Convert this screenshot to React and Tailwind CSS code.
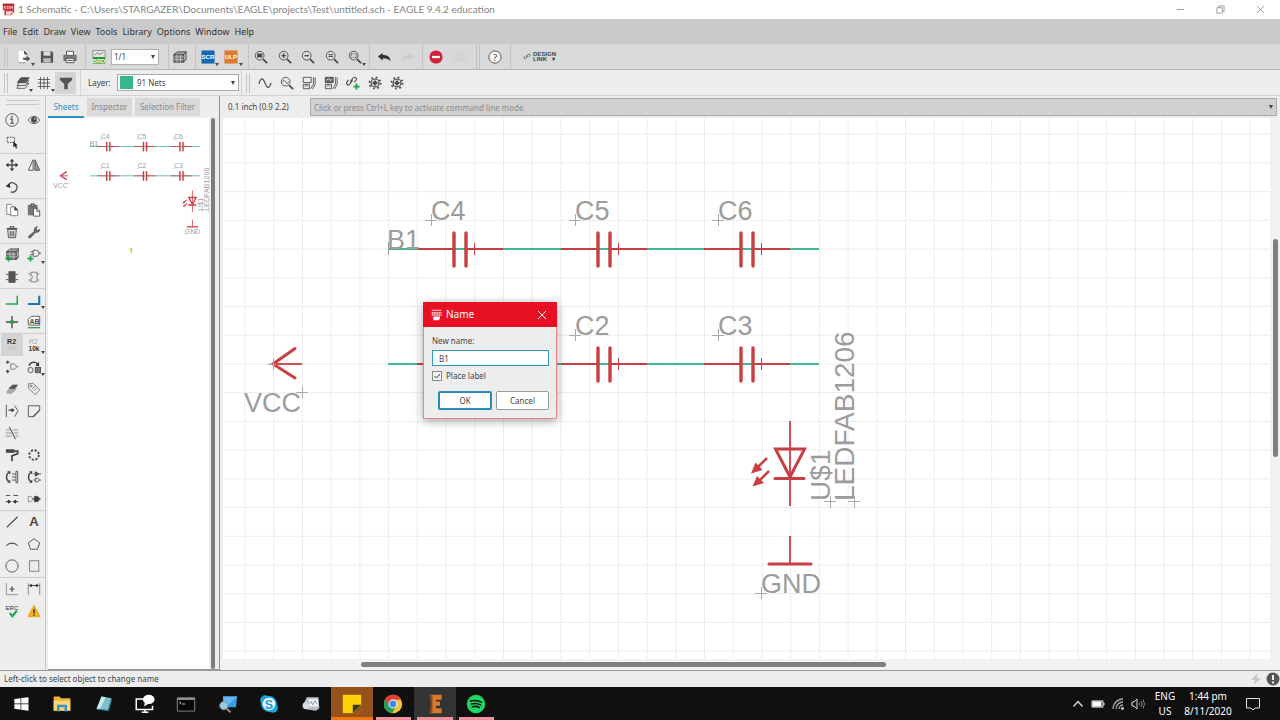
import React from "react";

const INK = "#4a4a4a";

function Svg({ children, size = "size-4", box = "0 0 16 16" }) {
  return (
    <svg viewBox={box} className={`${size} shrink-0`} fill="none" stroke={INK} strokeWidth="1" aria-hidden="true">
      {children}
    </svg>
  );
}

const Lens = ({ children }) => (
  <>
    <circle cx="6.5" cy="6.5" r="5" />
    <path d="M10.3 10.3 15 15" strokeWidth="2" />
    {children}
  </>
);

const Chip = ({ label }) => (
  <>
    <rect x="0.5" y="0.5" width="15" height="15" fill={label === "SCR" ? "#1767b3" : "#dd7a2f"} stroke="none" />
    <text x="8" y="10.5" fontSize="7" fontWeight="700" fill="#fff" stroke="none" textAnchor="middle" fontFamily="Liberation Sans, sans-serif">{label}</text>
  </>
);

const Brick = () => (
  <>
    <path d="M1 5 5 2h10l-3 3z" fill="#aaa" />
    <path d="M1 5h11v9H1z" fill="#777" />
    <path d="M12 5l3-3v9l-3 3z" fill="#999" />
    <path d="M1 8h11l3-3M1 11h11l3-3M4.5 5v9M8.5 5v9" stroke="#ddd" strokeWidth=".7" />
  </>
);

const Gear = () => (
  <>
    <circle cx="8" cy="8" r="4.6" strokeWidth="1.3" />
    <circle cx="8" cy="8" r="6.4" strokeWidth="2" strokeDasharray="2 3.03" />
    <circle cx="8" cy="8" r="2" fill={INK} />
    <path d="M8 3.5v3M8 9.500v3M3.500 8h3M9.500 8h3" />
  </>
);

const Link = () => <path d="M6 8.500 9.500 4a2 2 0 0 1 3.200 2.300L10.500 9M8 7l-1.500-.6M8.500 7 5 11.500a2 2 0 0 1-3.200-2.300L4 6.500" strokeWidth="1.200" />;
const Plus = () => <path d="M4 8.500v7M.5 12h7" stroke="#1fa145" strokeWidth="2" />;

const glyphs = {
  newdoc: (
    <>
      <path d="M2 1.500h7l3 3V7M12 11v3.500H2z" fill="#fff" stroke="none" />
      <path d="M2 1.500h7v10l-2 3H2z" fill="#fff" stroke="none" />
      <path d="M8.500 1.500l3 3v2M2 14.500h8" stroke="#888" />
      <path d="M8.500 1.500v3h3z" fill="#444" />
      <path d="M7 10h5" strokeWidth="2.200" />
      <path d="M11 6.500 15 10l-4 3.500z" fill={INK} stroke="none" />
    </>
  ),
  save: (
    <>
      <path d="M1 1.500h12.500L15 3v11.500H1z" fill="#555" stroke="none" />
      <path d="M4 1.500h8v5H4z" fill="#ddd" stroke="none" />
      <path d="M3.500 9h9v5.500h-9z" fill="#999" stroke="none" />
      <path d="M4.500 11h7M4.500 13h7" stroke="#ddd" />
    </>
  ),
  print: (
    <>
      <path d="M4 1.500h8v5H4z" fill="#fff" />
      <path d="M1 6h14v6H1z" fill="#7b7b7b" stroke="#666" />
      <path d="M3.500 9.500h9v5h-9z" fill="#eee" />
      <path d="M5 12h6" />
    </>
  ),
  schbrd: (
    <>
      <rect x="1" y="0.500" width="14" height="8" fill="#e4e4e4" stroke="#888" />
      <path d="M3 6l3-3 3 2 4-2.500" stroke="#777" />
      <rect x="1" y="8" width="14" height="7.500" fill="#1f9a43" stroke="none" />
      <text x="8" y="14.300" fontSize="6.500" fontWeight="700" fill="#fff" stroke="none" textAnchor="middle" fontFamily="Liberation Sans, sans-serif">BRD</text>
    </>
  ),
  brick: <Brick />,
  scr: <Chip label="SCR" />,
  ulp: <Chip label="ULP" />,
  zoomfit: <Lens><rect x="4" y="4.500" width="5" height="3.500" fill={INK} /></Lens>,
  zoomin: <Lens><path d="M6.500 4v5M4 6.500h5" strokeWidth="1.500" /></Lens>,
  zoomout: <Lens><path d="M4 6.500h5" strokeWidth="1.500" /></Lens>,
  zoomredraw: <Lens><path d="M4 5.500h5M4 7.500h5" strokeWidth="1.200" /></Lens>,
  zoomsel: <Lens><rect x="3.500" y="4.500" width="6" height="4" strokeDasharray="1.500 1" /></Lens>,
  undo: <path d="M1 7.500 6.500 3v2.800c5 0 8.500 1.700 9 7C13 10 10 9.300 6.500 9.300V12z" fill="#333" stroke="none" />,
  redo: <path d="M15 7.500 9.500 3v2.800C4.500 5.800 1.500 7.500 1 12.800 3.500 10 6 9.300 9.500 9.300V12z" fill="#cecece" stroke="none" />,
  stop: (
    <>
      <circle cx="8" cy="8" r="7.500" fill="#d3213c" stroke="none" />
      <path d="M3.500 8h9" stroke="#fff" strokeWidth="2.600" />
    </>
  ),
  go: <circle cx="8" cy="8" r="6" fill="#d2d2d2" stroke="#cdcdcd" />,
  help: (
    <>
      <circle cx="8" cy="8" r="7" fill="#f4f4f4" />
      <text x="8" y="12" fontSize="11" fill={INK} stroke="none" textAnchor="middle" fontFamily="Noto Sans, sans-serif">?</text>
    </>
  ),
  link: <Link />,
  layers: (
    <>
      <path d="M5 8.500h9.500L10.500 14H1z" fill="#fff" />
      <path d="M5 5.500h9.500L10.500 11H1z" fill="#ddd" />
      <path d="M5.500 2h9.500L11 7.500H1.500z" fill="#555" />
    </>
  ),
  grid: <path d="M4 1v14M8 1v14M12 1v14M1 4h14M1 8h14M1 12h14" strokeWidth=".9" />,
  filter: <path d="M1 2h14v2.500L10 9v6H6V9L1 4.500z" fill="#555" stroke="none" />,
  wave: <path d="M1 9C3 1.500 5.500 1.500 8 8s4.500 7 7 0" strokeWidth="1.300" />,
  lenswave: <Lens><path d="M3 7c1-3 2.500-2.500 3.500 0s2.500 2 3.200-.6" /></Lens>,
  simA: (
    <>
      <path d="M1.500 1.500h9v6h-9zM1.500 9.500h7v5h-7zM13 1.500v8l-3 5M15 1.500v8L12 15" />
      <path d="M3 12l2-1.500 2 1.500" />
    </>
  ),
  simB: (
    <>
      <path d="M1.500 1.500h9v6h-9z" fill="#666" />
      <path d="M1.500 9.500h7v5h-7zM13 1.500v8l-3 5M15 1.500v8L12 15M3 12l2-1.500 2 1.500" />
      <path d="M3 5l2-2 2 2 2-1" stroke="#eee" />
    </>
  ),
  linkplus: <><g transform="translate(-1 -2)"><Link /></g><g transform="translate(8 0)"><Plus /></g></>,
  gear: <Gear />,
  info: (
    <>
      <circle cx="8" cy="8" r="7.200" />
      <path d="M6 7h2.200v4.500M6 11.700h4.500" strokeWidth="1.300" />
      <circle cx="8" cy="4.500" r="1" fill={INK} stroke="none" />
    </>
  ),
  eye: (
    <>
      <path d="M1.500 8c3-5.500 10-5.500 13 0-3 5.500-10 5.500-13 0z" />
      <circle cx="8" cy="7.800" r="3" fill={INK} />
      <circle cx="9" cy="6.800" r=".8" fill="#fff" stroke="none" />
    </>
  ),
  group: (
    <>
      <rect x="2.500" y="2.500" width="8.500" height="6" strokeDasharray="2 1" />
      <path d="M9.500 7v7l1.700-1.400 1.500 2.900 1.300-.7-1.400-2.600 2-.3z" fill="#222" stroke="none" />
    </>
  ),
  move: (
    <>
      <path d="M8 3v10M3 8h10" strokeWidth="1.500" />
      <path d="M8 .8 10.500 4h-5zM8 15.200 10.500 12h-5zM.8 8 4 5.500v5zM15.200 8 12 5.500v5z" fill="#333" stroke="none" />
    </>
  ),
  mirror: <><path d="M7 2v12H1.500z" /><path d="M9 2v12h5.500z" fill="#999" /></>,
  rotate: <><path d="M4 5.500a5.300 5.300 0 1 1 2.500 8" strokeWidth="1.400" /><path d="M.8 7.500 6.500 8.800 5 3z" fill="#333" stroke="none" transform="rotate(8 3 6)" /></>,
  copy: <><path d="M2 1.500h5l2.500 2.500v9H2z" fill="#fff" stroke="#777" /><path d="M6.500 4.500h5L14.500 8v6.500h-8z" fill="#fff" stroke="#777" /><path d="M11 4.500V8h3.500z" fill="#444" /></>,
  paste: <><path d="M1.500 2.500h10v11h-10z" fill="#777" stroke="#666" /><path d="M4.500 1h4v3h-4z" fill="#999" /><path d="M7.500 6h4l3 3v6h-7z" fill="#fff" /><path d="M11 6v3.500h3.500" /></>,
  trash: <><path d="M3 5h10l-1 9.500H4z" fill="#ddd" /><path d="M2 4h12M6 3.500V2h4v1.500" strokeWidth="1.300" /><path d="M6 7v6M8 7v6M10 7v6" /></>,
  wrench: <path d="M1.500 12.500 8 7c-.8-3 1.500-6 5-5.500L10.800 4l1.200 1.700L15 4.300c.4 3.200-2.500 5.300-5 4.600L4 15c-2 .8-3.500-1-2.500-2.500z" fill="#666" stroke="none" />,
  addbrick: <><g transform="translate(1 -1)"><Brick /></g><Plus /></>,
  addgate: <><path d="M7 2.500h3c5 0 5 7 0 7H7zM4 4.500h3M4 7.500h3M13.500 6H16" /><Plus /></>,
  part: <><rect x="4.500" y="2" width="7" height="12" fill="#555" /><path d="M1 5h3M1 11h3M12 5h3M12 11h3" /></>,
  partout: <path d="M4.500 2.500h7v11h-7v-3.500a1.500 1.500 0 0 0 0-3.500zM1.500 4.500h3M1.500 11.500h3M11.500 4.500H14M11.500 11.500H14" stroke="#777" />,
  net: <path d="M1 12.500h13V3" stroke="#2aa052" strokeWidth="1.700" />,
  bus: <path d="M1 12.500h13V3" stroke="#1c74c4" strokeWidth="2.400" />,
  junction: <><path d="M8 1v14M1 8h14" strokeWidth="1.500" /><circle cx="8" cy="8" r="2.500" fill="#2aa052" stroke="none" /></>,
  label: (
    <>
      <path d="M5 1.500h9.500v10h-13V5z" fill="#fff" />
      <text x="8.500" y="9.800" fontSize="8" fontWeight="700" fill={INK} stroke="none" textAnchor="middle" fontFamily="Liberation Sans, sans-serif">AB</text>
      <path d="M1 14.500h14" stroke="#2aa052" strokeWidth="1.500" />
    </>
  ),
  name: (
    <>
      <text x="7.500" y="7" fontSize="8" fontWeight="700" fill="#333" stroke="none" textAnchor="middle" fontFamily="Liberation Sans, sans-serif">R2</text>
      <path d="M4 10.500h9M4 12.500h9" stroke="#c2c2c2" />
    </>
  ),
  value: (
    <>
      <text x="7" y="6.500" fontSize="8" fill="#aaa" stroke="none" textAnchor="middle" fontFamily="Liberation Sans, sans-serif">R2</text>
      <text x="8" y="14.500" fontSize="7.500" fontWeight="700" fill="#333" stroke="none" textAnchor="middle" fontFamily="Liberation Sans, sans-serif">10k</text>
    </>
  ),
  gateswap: <><path d="M6.500 4.500h3c4.500 0 4.500 6 0 6h-3zM13 7.500h2.500" stroke="#777" /><path d="M1 2.500h4M3 .8v3.500M1 13h4M3 11v4" strokeWidth="1.500" /></>,
  replace: <><circle cx="4" cy="11.500" r="3" /><rect x="9.500" y="8.500" width="6" height="6" fill="#777" /><path d="M2.500 6.500C4 2 9 1.500 12 4.500" strokeWidth="1.700" /><path d="M9.500 6.500 14 7l-.5-5z" fill="#333" stroke="none" /></>,
  block: <><path d="M2 10 9 3h5.500l-2 6-5 4.500H2z" fill="#aaa" stroke="none" /><path d="M4 7.500 8.500 3H15l-4.500 5z" fill="#555" stroke="none" /></>,
  tag: <><path d="M1.500 2 7 1.500l7.500 7.500-5 5.500L2 7.500z" stroke="#777" /><circle cx="4.500" cy="4.500" r="1.200" stroke="#777" /><path d="m6 8 3-3M8 10l3-3" stroke="#777" /></>,
  splitwire: <><path d="M1.500 1v14M11 2l4 6-4 6.500" /><path d="M4 7h4" strokeWidth="1.500" /><path d="M7.500 4.500 11 7 7.500 9.500z" fill="#333" stroke="none" /></>,
  miter: <><path d="M7.500 14.500h-6V2h13v5" /><path d="M7 14.500 14.500 7" strokeWidth="1.500" /></>,
  slice: <><path d="M1 4.500h5M9 4.500h6M1 8h6.500M10 8h5M1 11.500h7M12 11.500h3" stroke="#888" /><path d="m5 1 7 14" strokeWidth="1.200" /></>,
  paint: <><path d="M1 1.500h10v4H1z" fill="#444" stroke="none" /><path d="M11 3.500h3.500v3L8 9v6" strokeWidth="2" /></>,
  array: <circle cx="8" cy="8" r="5.500" strokeWidth="2.200" strokeDasharray="2.500 1.820" />,
  pinswap: <><path d="M4 3C1 5 1 11 4 13" strokeWidth="1.800" /><path d="M2.500 1.500h3.500v3.500zM2.500 14.500h3.500V11z" fill="#333" stroke="none" /><path d="M8 4.500h4M8 8h4M8 11.500h4M12.500 1.500h2v13h-2z" /></>,
  gatesw2: <><path d="M4 3C1 5 1 11 4 13" strokeWidth="1.800" /><path d="M2.500 1.500h3.500v3.500zM2.500 14.500h3.500V11z" fill="#333" stroke="none" /><path d="M9.500 2v5l4-2.500z" fill="#444" /><path d="M7.500 4.500H16M9.500 9.500h2c3 0 3 4 0 4h-2zM7.500 11.500h2M14 11.500h2" /></>,
  gap: <><path d="M1 4h5M9.500 4h5.500" /><path d="M1 11h3.500M11.500 11H15" strokeWidth="1.300" /><path d="m3.500 8.500 4 2.500-4 2.500zM12.500 8.500l-4 2.500 4 2.500z" fill="#333" stroke="none" /></>,
  bridge: <><path d="M1.500 5h2.500c3 0 3 6 0 6H1.500z" stroke="#888" /><path d="M8.500 5H11c4 0 4 6 0 6H8.500z" fill="#333" /><path d="M6.500 8h9" strokeWidth="1.500" /></>,
  line: <path d="M2 14 14.500 2" strokeWidth="1.200" />,
  text: <text x="8" y="13" fontSize="15" fontWeight="700" fill={INK} stroke="none" textAnchor="middle" fontFamily="Liberation Sans, sans-serif">A</text>,
  arc: <path d="M1.500 10c3.500-4 9.500-4 13 0" strokeWidth="1.200" />,
  circle: <circle cx="8" cy="8" r="7" />,
  polygon: <path d="M8 2 14.500 6.800 12 14H4L1.500 6.800z" />,
  rect: <rect x="3" y="2" width="10.500" height="12" stroke="#777" />,
  origin: <><path d="M1.500 1v13.500H15" stroke="#888" /><path d="M8 5v6M5 8h6" strokeWidth="1.400" /></>,
  dim: <><path d="M1.500 1.500v13M14.500 1.500v13" stroke="#777" /><path d="M3 4h10" strokeWidth="1.300" /><path d="M2 4 5.500 2v4zM14 4l-3.500-2v4z" fill="#333" stroke="none" /></>,
  erc: (
    <>
      <text x="8" y="6.500" fontSize="7" fill="#333" stroke="none" textAnchor="middle" fontFamily="Liberation Sans, sans-serif">ERC</text>
      <path d="m5.500 10.500 3 3.500 5-6.500" stroke="#1fa145" strokeWidth="2.400" />
    </>
  ),
  warn: <><path d="M8 1.500 15 14.500H1z" fill="#f5b21d" stroke="#e8a012" strokeLinejoin="round" /><path d="M8 6v4.500M8 12v1.500" stroke="#222" strokeWidth="1.600" /></>,
  sheet: (
    <>
      <path d="M1 1h14v10l-4 4H3V9H1z" fill="#d6343b" stroke="none" />
      <path d="M1 1h14v1.500H1z" fill="#8e2a2e" stroke="none" />
      <path d="M3.500 4v3M6 4.500h2M6 6.500h2M10 4v3M12.500 4v3" stroke="#fff" strokeWidth="1.200" />
      <path d="M5 10h8v1.500l-3 3H5z" fill="#f3dada" stroke="none" />
    </>
  ),
  sheetlight: (
    <>
      <path d="M1 1h13v1.500H1zM1 4h13v5H1z" fill="#f8b8bc" stroke="none" />
      <path d="M3.500 5v3M6 5.500h2M6 7.500h2M10 5v3M12.500 5v3" stroke="#d11c2b" />
      <path d="M3 10h9v2.500L10 15H3z" fill="#fff" stroke="none" />
    </>
  ),
};

function Caret() {
  return <span aria-hidden="true" className="absolute right-0 bottom-[2px] border-x-2 border-t-3 border-x-transparent border-t-[#444]" />;
}

function Tool({ id, label, caret, active, width = "w-[22px]", dim }) {
  return (
    <button type="button" aria-label={label} aria-pressed={active} className={`relative flex h-[22px] ${width} shrink-0 items-center justify-center ${active ? "bg-[#d4d4d4]" : ""} ${dim ? "opacity-60" : ""}`}>
      <Svg size="size-[14px]">{glyphs[id]}</Svg>
      {caret && <Caret />}
    </button>
  );
}

const Sep = ({ tone = "bg-[#c3c3c3]" }) => <span aria-hidden="true" className={`h-full w-px shrink-0 ${tone}`} />;
const Grip = () => <span aria-hidden="true" className="mx-1 h-5 w-1 shrink-0 border-x border-[#c4c4c4]" />;
const Down = () => <span aria-hidden="true" className="pointer-events-none mr-[3px] border-x-2 border-t-4 border-x-transparent border-t-[#444]" />;

const menus = ["File", "Edit", "Draw", "View", "Tools", "Library", "Options", "Window", "Help"];

const palette = [
  [["info", "Info"], ["eye", "Show"], ["group", "Group"]],
  [["move", "Move"], ["mirror", "Mirror"], ["rotate", "Rotate"]],
  [["copy", "Copy"], ["paste", "Paste"], ["trash", "Delete"], ["wrench", "Change"]],
  [["addbrick", "Add part"], ["addgate", "Add gate", 1], ["part", "Module"], ["partout", "Port"]],
  [["net", "Net"], ["bus", "Bus", 1], ["junction", "Junction"], ["label", "Label"]],
  [["name", "Name"], ["value", "Value", 1], ["gateswap", "Smash"], ["replace", "Replace", 1], ["block", "Design block"], ["tag", "Attribute"], ["splitwire", "Split"], ["miter", "Miter"], ["slice", "Slice"], null, ["paint", "Paint"], ["array", "Array"], ["pinswap", "Pin swap"], ["gatesw2", "Gate swap"], ["gap", "Optimize"], ["bridge", "Invoke"]],
  [["line", "Line"], ["text", "Text"], ["arc", "Arc"], ["polygon", "Polygon"], ["circle", "Circle"], ["rect", "Rectangle"]],
  [["origin", "Mark"], ["dim", "Dimension"], ["erc", "ERC"], ["warn", "Errors"]],
];

const RED = "#c93e42";
const GREEN = "#43b796";

function Capacitor({ x, y, name, k }) {
  return (
    <g>
      <g stroke={RED}>
        <path d={`M${x - 43} ${y}h36M${x + 6} ${y}h37`} strokeWidth={1.8 * k} />
        <path d={`M${x - 6} ${y - 16}v33M${x + 6} ${y - 16}v33`} strokeWidth={3.4 * k} strokeLinecap="round" />
        <path d={`M${x + 14.500} ${y - 6}v12`} strokeWidth="1" />
      </g>
      {name && (
        <>
          <path d={`M${x - 35} ${y - 28.500}h12M${x - 28.500} ${y - 35}v12`} stroke="#aaa" strokeWidth="1" />
          <text x={x - 29} y={y - 29}>{name}</text>
        </>
      )}
    </g>
  );
}

function Drawing({ k = 1, first }) {
  return (
    <g fill="#9c9c9c" fontSize="27" fontFamily="Liberation Sans, Arial, sans-serif">
      <path d="M388 249h431M388 364h431" fill="none" stroke={GREEN} strokeWidth={1.8 * k} />
      <Capacitor x={460} y={249} name="C4" k={k} />
      <Capacitor x={604} y={249} name="C5" k={k} />
      <Capacitor x={747} y={249} name="C6" k={k} />
      <Capacitor x={460} y={364} name={first} k={k} />
      <Capacitor x={604} y={364} name="C2" k={k} />
      <Capacitor x={747} y={364} name="C3" k={k} />
      <path d="M388.500 242v13" stroke="#999" />
      <text x="387" y="249">B1</text>
      <g fill="none" stroke={RED} strokeWidth={1.8 * k}>
        <path d="M273 364h29" />
        <path d="M295 348.500 273 364l22 14" strokeWidth={3 * k} strokeLinecap="round" />
        <path d="M790 421v85M790 536v28" />
        <path d="M775.500 449h29L790 477zM775 478.500h29M769 564h42" strokeWidth={3 * k} strokeLinecap="round" />
        <path d="m767 458-9 9M769 471l-9 9" strokeWidth={2.500 * k} />
        <path d="m751 473.500 4.500-11 7 7.500zM752.500 486.500 757 476l7 7z" fill={RED} stroke="none" />
      </g>
      <g stroke="#aaa" strokeWidth="1">
        <path d="M296 392.500h12M302.500 386v12M824 501.500h12M830.500 496v12M848 501.500h12M854.500 496v12M755 593.500h12M761.500 587v12M268 364.500h8M273.500 358v12" />
      </g>
      <text x="244" y="412">VCC</text>
      <text x="761" y="593">GND</text>
      <g fontSize="28">
        <text transform="translate(830 501) rotate(-90)">U$1</text>
        <text transform="translate(854 501) rotate(-90)">LEDFAB1206</text>
      </g>
    </g>
  );
}

function NameDialog() {
  return (
    <form role="dialog" aria-label="Name" onSubmit={(e) => e.preventDefault()} className="absolute top-[184px] left-[200px] w-[134px] border border-[#e4858b] bg-[#ededed] shadow-[0_2px_9px_rgba(0,0,0,0.35)]">
      <header className="-mx-px -mt-px flex h-[25px] items-center bg-[#e81123] pr-[10px] pl-2 text-white">
        <Svg size="size-3">{glyphs.sheetlight}</Svg>
        <h2 className="ml-[3px] flex-1 text-[10px]">Name</h2>
        <button type="button" aria-label="Close">
          <svg viewBox="0 0 10 10" className="size-[10px]" stroke="#fff" aria-hidden="true"><path d="m1 1 8 8M9 1 1 9" /></svg>
        </button>
      </header>
      <div className="pt-2 pr-[7px] pb-2 pl-2">
        <label htmlFor="net-name" className="block h-3 leading-3">New name:</label>
        <input id="net-name" defaultValue="B1" className="mt-[3px] block h-4 w-full border border-[#2f96bd] bg-white px-[6px] outline-none" />
        <label className="mt-1 flex h-3 items-center gap-1">
          <span className="relative flex size-[10px]">
            <input type="checkbox" defaultChecked className="peer size-[10px] appearance-none border border-[#8a8a8a] bg-[#f6f6f6]" />
            <svg viewBox="0 0 10 10" className="pointer-events-none absolute inset-0 hidden size-[10px] peer-checked:block" fill="none" stroke="#333" aria-hidden="true"><path d="m2.500 5 2 2 3.500-4" /></svg>
          </span>
          Place label
        </label>
        <div className="mt-[9px] flex justify-end gap-1">
          <button type="submit" className="h-[19px] w-[54px] rounded-xs border-2 border-[#2b8db5] bg-white">OK</button>
          <button type="button" className="h-[19px] w-[53px] rounded-xs border border-[#9a9a9a] bg-white">Cancel</button>
        </div>
      </div>
    </form>
  );
}

const apps = [
  ["Start", <path d="m4 6 7.500-1v6.500H4zM12.300 4.900 21 3.800v7.700h-8.700zM4 12.300h7.500v6.500L4 17.700zM12.300 12.300H21V20l-8.700-1.100z" fill="#fff" />],
  ["File Explorer", <><path d="M2 3h7l2 2h11v15H2z" fill="#e9b23c" /><path d="M2 8h20v12H2z" fill="#fad776" /><path d="M6 21v-8h12v8h-3v-5H9v5z" fill="#3d8fcc" /></>],
  ["Notepad", <><path d="m9 3 12 2-4 15-14-2z" fill="#7cc0cc" /><path d="m9 3 5 1-7 14.500L3 18z" fill="#cdeaf0" /><path d="m4 18 13 2 4-13" stroke="#367884" strokeWidth="1.500" fill="none" /></>],
  ["Remote chat", <><path d="M11 6H1.500v12.500H21V14M8 22h8M12 18v4" fill="none" stroke="#fff" strokeWidth="1.800" /><ellipse cx="16.500" cy="6.500" rx="7" ry="5.500" fill="#fff" /><path d="m12 9-1 6 6-4z" fill="#fff" /></>],
  ["Command Prompt", <><path d="M1.500 4.500h21v16h-21z" fill="#080808" stroke="#999" /><path d="M2 5h20v2H2z" fill="#aaa" /><path d="m4 9 2 1.500L4 12M7 12h4" stroke="#ddd" fill="none" /></>],
  ["Remote Desktop", <><path d="M6 3h17l-1.500 13H7z" fill="#3a9be6" /><path d="M6 3h17l-12 11-4 1z" fill="#66b9f3" /><circle cx="7" cy="14" r="5" fill="#9cc7e0" stroke="#6b8595" /><path d="m10 17 5 5" stroke="#9a8c82" strokeWidth="2.500" /></>],
  ["Skype", <><circle cx="12" cy="12" r="9.500" fill="#19a7e7" /><circle cx="7.500" cy="7.500" r="6" fill="#19a7e7" /><circle cx="16.500" cy="16.500" r="6" fill="#19a7e7" /><circle cx="12" cy="12" r="7.500" fill="#fff" opacity=".95" /><text x="12" y="17.500" textAnchor="middle" fontSize="15" fontWeight="700" fill="#1397d8" fontFamily="Liberation Sans, sans-serif">S</text></>],
  ["Monitor", <><path d="M7 4h14l1 13-4 3-14-2-2-4z" fill="#b9c1c6" /><path d="M9 6h11l1 9H10z" fill="#eef3f5" /><circle cx="6" cy="14" r="4" fill="#d8dcdf" /><path d="m9 12 3-3 2 4 3-5 2 4" stroke="#6f8da0" fill="none" /></>],
  ["Sticky Notes", <><path d="M1 1h22v22H1z" fill="#fdd20a" /><path d="M13 23V13h10z" fill="#3c3720" /><path d="M23 13v10H13z" fill="#95531b" /></>, "bg-[#95531b] border-b-[#f0770f]"],
  ["Chrome", <><circle cx="12" cy="12" r="11" fill="#f5c62c" /><path d="M12 12 2.500 6.500A11 11 0 0 0 11 23l5-9z" fill="#23a05a" /><path d="M12 7h9.800A11 11 0 0 0 2.500 6.500L8 14z" fill="#dd4437" /><circle cx="12" cy="12" r="5.300" fill="#fff" /><circle cx="12" cy="12" r="4.100" fill="#4485ee" /></>, "", 1],
  ["EAGLE", <><path d="M5 1h15v6h-7v2h5v5h-5v3h7v6H5l2-4V5z" fill="#d97a2d" /><path d="M5 1h4v22H5l2-4V5z" fill="#8d4717" /></>, "bg-[#333]", 1],
  ["Spotify", <><circle cx="12" cy="12" r="11" fill="#1ed760" /><path d="M5.500 8.500c4.500-1.300 9-.8 13 1.300M6.500 12c4-1 7.500-.6 11 1.200M7.500 15.300c3-.8 6-.5 8.500 1" stroke="#111" strokeWidth="1.900" fill="none" strokeLinecap="round" /></>, "", 1],
];

export default function App() {
  return (
    <div className="flex h-screen flex-col overflow-hidden bg-[#ededed] font-['Noto_Sans','Open_Sans',sans-serif] text-[8px] text-[#444]">
      <header className="flex h-[19px] shrink-0 items-center bg-white pl-[2px]">
        <Svg size="size-[13px]">{glyphs.sheet}</Svg>
        <h1 className="ml-[3px] flex-1 truncate font-[Lato,sans-serif] text-[10px] text-[#858585]">1 Schematic - C:\Users\STARGAZER\Documents\EAGLE\projects\Test\untitled.sch - EAGLE 9.4.2 education</h1>
        {[["Minimize", "M1 5h8"], ["Restore", "M1 3h6v6H1zM3 3V1h6v6H7"], ["Close", "m1 1 8 8M9 1 1 9"]].map(([n, d]) => (
          <button key={n} type="button" aria-label={n} className="flex w-10 justify-center">
            <svg viewBox="0 0 10 10" className="size-[9px]" fill="none" stroke="#9a9a9a" aria-hidden="true"><path d={d} /></svg>
          </button>
        ))}
      </header>

      <nav aria-label="Menu" className="flex h-[25px] shrink-0 items-center gap-[5px] bg-[#cacaca] pl-[3px] text-[9px] text-[#333]">
        {menus.map((m) => <button key={m} type="button">{m}</button>)}
      </nav>

      <div role="toolbar" aria-label="Actions" className="flex h-[26px] shrink-0 items-center border-b border-[#b5b5b5] bg-[#d9d9d9]">
        <Grip />
        <Tool id="newdoc" label="New" caret width="w-[23px]" />
        <Tool id="save" label="Save" width="w-[23px]" />
        <Tool id="print" label="Print" width="w-[23px]" />
        <span className="w-1" /><Sep />
        <Tool id="schbrd" label="Switch to board" width="w-[25px]" />
        <span className="flex h-4 w-12 items-center border border-[#b0b0b0] bg-white">
          <select aria-label="Sheet" className="h-full min-w-0 flex-1 appearance-none pl-[2px] outline-none"><option>1/1</option></select>
          <Down />
        </span>
        <span className="w-[9px]" /><Sep />
        <Tool id="brick" label="Library" />
        <span className="w-1" /><Sep />
        <Tool id="scr" label="Run script" caret width="w-[23px]" />
        <Tool id="ulp" label="Run ULP" caret width="w-[24px]" />
        <span className="w-[5px]" /><Sep />
        <Tool id="zoomfit" label="Fit" width="w-[24px]" />
        <Tool id="zoomin" label="Zoom in" width="w-[23px]" />
        <Tool id="zoomout" label="Zoom out" width="w-[24px]" />
        <Tool id="zoomredraw" label="Redraw" width="w-[23px]" />
        <Tool id="zoomsel" label="Zoom select" caret width="w-[23px]" />
        <span className="w-[3px]" /><Sep />
        <Tool id="undo" label="Undo" width="w-[28px]" />
        <Tool id="redo" label="Redo" width="w-[20px]" />
        <span className="w-1" /><Sep />
        <Tool id="stop" label="Stop" width="w-[26px]" />
        <Tool id="go" label="Go" width="w-[22px]" dim />
        <span className="w-[5px]" /><Sep /><span className="w-[2px]" /><Sep />
        <Tool id="help" label="Help" width="w-[30px]" />
        <Sep />
        <button type="button" className="ml-3 flex items-center gap-[1px] text-left font-['Liberation_Sans',sans-serif] text-[6px] leading-[5px] font-bold">
          <Svg size="size-[9px]">{glyphs.link}</Svg>
          <span>DESIGN<br />LINK <span className="ml-[3px]">▾</span></span>
        </button>
      </div>

      <div role="toolbar" aria-label="Parameters" className="flex h-[26px] shrink-0 items-center border-b border-[#d2d2d2]">
        <Grip />
        <Tool id="layers" label="Layer settings" caret width="w-[21px]" />
        <Tool id="grid" label="Grid" caret />
        <Tool id="filter" label="Filter" active width="w-[21px]" />
        <span className="w-1" /><Sep tone="bg-[#d4d4d4]" />
        <label htmlFor="layer" className="ml-[7px] w-[29px]">Layer:</label>
        <span className="flex h-[17px] w-[122px] items-center border border-[#a9a9a9] bg-white pl-[2px]">
          <span className="size-[13px] shrink-0 bg-[#34b78c]" />
          <select id="layer" className="h-full min-w-0 flex-1 appearance-none pl-1 outline-none"><option>91 Nets</option></select>
          <Down />
        </span>
        <span className="w-[2px]" /><Sep tone="bg-[#d4d4d4]" /><Grip />
        <Tool id="wave" label="Simulate" />
        <Tool id="lenswave" label="Probe" />
        <Tool id="simA" label="Source setup" />
        <Tool id="simB" label="Model map" />
        <Tool id="linkplus" label="Add model" />
        <Tool id="gear" label="Digital" />
        <Tool id="gear" label="Settings" />
      </div>

      <main className="flex min-h-0 flex-1">
        <aside aria-label="Commands" className="w-[46px] shrink-0 border-r border-[#c9c9c9]">
          <div className="mx-[6px] mt-1 mb-1 h-[5px] border-y border-[#c9c9c9]" />
          {palette.map((group, g) => (
            <div key={g} className="grid grid-cols-2 border-b border-[#cfcfcf] pl-[1px] last:border-b-0">
              {group.map((t, i) => t ? <Tool key={i} id={t[0]} label={t[1]} caret={!!t[2]} active={t[0] === "name"} /> : <span key={i} />)}
            </div>
          ))}
        </aside>

        <section className="flex w-[174px] shrink-0 flex-col border-r border-[#8f8f8f] pl-[2px]">
          <div role="tablist" className="flex h-[22px] shrink-0 items-end gap-[3px] text-[#8a8a8a]">
            <button type="button" role="tab" aria-selected="true" className="h-5 w-9 border-b-2 border-[#2795c4] text-[#2795c4]">Sheets</button>
            <button type="button" role="tab" className="mb-[2px] h-[18px] w-[45px] bg-[#d9d9d9]">Inspector</button>
            <button type="button" role="tab" className="mb-[2px] h-[18px] w-[65px] bg-[#d9d9d9]">Selection Filter</button>
          </div>
          <div className="flex min-h-0 flex-1 border-b border-[#999]">
            <svg className="h-full min-w-0 flex-1 bg-white" role="img" aria-label="Sheet preview">
              <g transform="translate(-57 -35) scale(.255)"><Drawing k={1.7} first="C1" /></g>
              <text x="81" y="135" fontSize="7" fontWeight="700" fill="#c9bd2a">1</text>
            </svg>
            <div className="ml-[2px] w-1 rounded-full bg-[#7d7d7d]" />
            <div className="w-1" />
          </div>
        </section>

        <section className="flex min-w-0 flex-1 flex-col">
          <div className="flex h-[22px] shrink-0 items-center pr-[3px] pl-2">
            <output className="w-[82px]">0.1 inch (0.9 2.2)</output>
            <span className="flex h-[18px] flex-1 items-center border border-[#aaa] bg-[#d0d0d0]">
              <input aria-label="Command line" placeholder="Click or press Ctrl+L key to activate command line mode" className="h-full flex-1 px-[3px] outline-none placeholder:text-[#8d8d8d]" />
              <Down />
            </span>
          </div>
          <div className="flex min-h-0 flex-1 pl-[3px]">
            <div className="relative min-w-0 flex-1 overflow-hidden bg-white">
              <svg className="absolute inset-0 size-full" role="img" aria-label="Schematic">
                <defs>
                  <pattern id="grid" width="28.720" height="28.720" patternUnits="userSpaceOnUse" x="21.500" y="15.700">
                    <path d="M.5 0v28.720M0 .5h28.720" fill="none" stroke="#ececec" />
                  </pattern>
                </defs>
                <rect width="100%" height="100%" fill="url(#grid)" />
                <g transform="translate(-223 -118)"><Drawing /></g>
              </svg>
              <NameDialog />
            </div>
            <div className="flex w-[10px] flex-col items-center bg-[#f2f2f2]">
              <div className="mt-[121px] h-[218px] w-[5px] rounded-full bg-[#808080]" />
            </div>
          </div>
          <div className="flex h-[11px] shrink-0 items-center bg-[#f2f2f2]">
            <div className="ml-[141px] h-[5px] w-[525px] rounded-full bg-[#808080]" />
          </div>
        </section>
      </main>

      <footer className="flex h-[17px] shrink-0 items-center border-t border-[#999] pl-1">
        <span className="flex-1">Left-click to select object to change name</span>
        <svg viewBox="0 0 14 14" className="size-3" aria-hidden="true"><path d="M9 0 1 8h5l-2 6 9-8H8z" fill="#c6c6c6" /></svg>
        <svg viewBox="0 0 14 14" className="ml-1 size-[14px]" role="img" aria-label="Notice"><circle cx="7" cy="7" r="6.500" fill="#555" /><path d="M7 3v5M7 9.500v2" stroke="#fff" strokeWidth="1.800" /></svg>
      </footer>

      <div className="flex h-[33px] shrink-0 items-stretch bg-[#101010] text-white">
        <div className="grid w-[497px] grid-cols-12">
          {apps.map(([name, art, tone = "", open]) => (
            <button key={name} type="button" aria-label={name} className={`relative flex items-center justify-center border-b-3 border-transparent pt-[3px] ${tone}`}>
              <svg viewBox="0 0 24 24" className="size-5" aria-hidden="true">{art}</svg>
              {open && <span className="absolute inset-x-[3px] -bottom-[3px] h-[3px] bg-[#f0929c]" />}
            </button>
          ))}
        </div>
        <div className="flex-1" />
        <div className="flex items-center text-center text-[10px] leading-[15px]">
          <div className="flex gap-[7px]">
            <svg viewBox="0 0 12 12" className="size-3" fill="none" stroke="#ddd" aria-hidden="true"><path d="m1.500 8.500 4.500-5 4.500 5" strokeWidth="1.300" /></svg>
            <svg viewBox="0 0 14 12" className="h-3 w-[14px]" fill="none" stroke="#fff" aria-hidden="true"><path d="M1 3h11v6H1zM13 5v2" /><path d="M2 4h8v4H2z" fill="#fff" /></svg>
            <svg viewBox="0 0 12 12" className="size-3" fill="none" stroke="#aaa" aria-hidden="true"><path d="M1 11A10 10 0 0 1 11 1M4 11a7 7 0 0 1 7-7M7 11a4 4 0 0 1 4-4" strokeWidth="1.300" /><circle cx="10.500" cy="10.500" r="1.200" fill="#ddd" /></svg>
            <svg viewBox="0 0 14 12" className="h-3 w-[14px]" fill="none" stroke="#ddd" aria-hidden="true"><path d="M1 4h2l3-3v10L3 8H1z" /><path d="M8 4.500q1.200 1.500 0 3M10 3q2.200 3 0 6M12 1.500q3 4.500 0 9" stroke="#888" /></svg>
          </div>
          <div className="ml-2 w-6">ENG<br />US</div>
          <div className="ml-[6px] w-[50px] whitespace-nowrap">1:44 pm<br />8/11/2020</div>
          <button type="button" aria-label="Notifications" className="mr-5 ml-[13px]">
            <svg viewBox="0 0 14 14" className="size-[14px]" fill="none" stroke="#ddd" aria-hidden="true"><path d="M.5 1.500h13v9.500H9l-2 2-2-2H.5z" /></svg>
          </button>
        </div>
      </div>
    </div>
  );
}
